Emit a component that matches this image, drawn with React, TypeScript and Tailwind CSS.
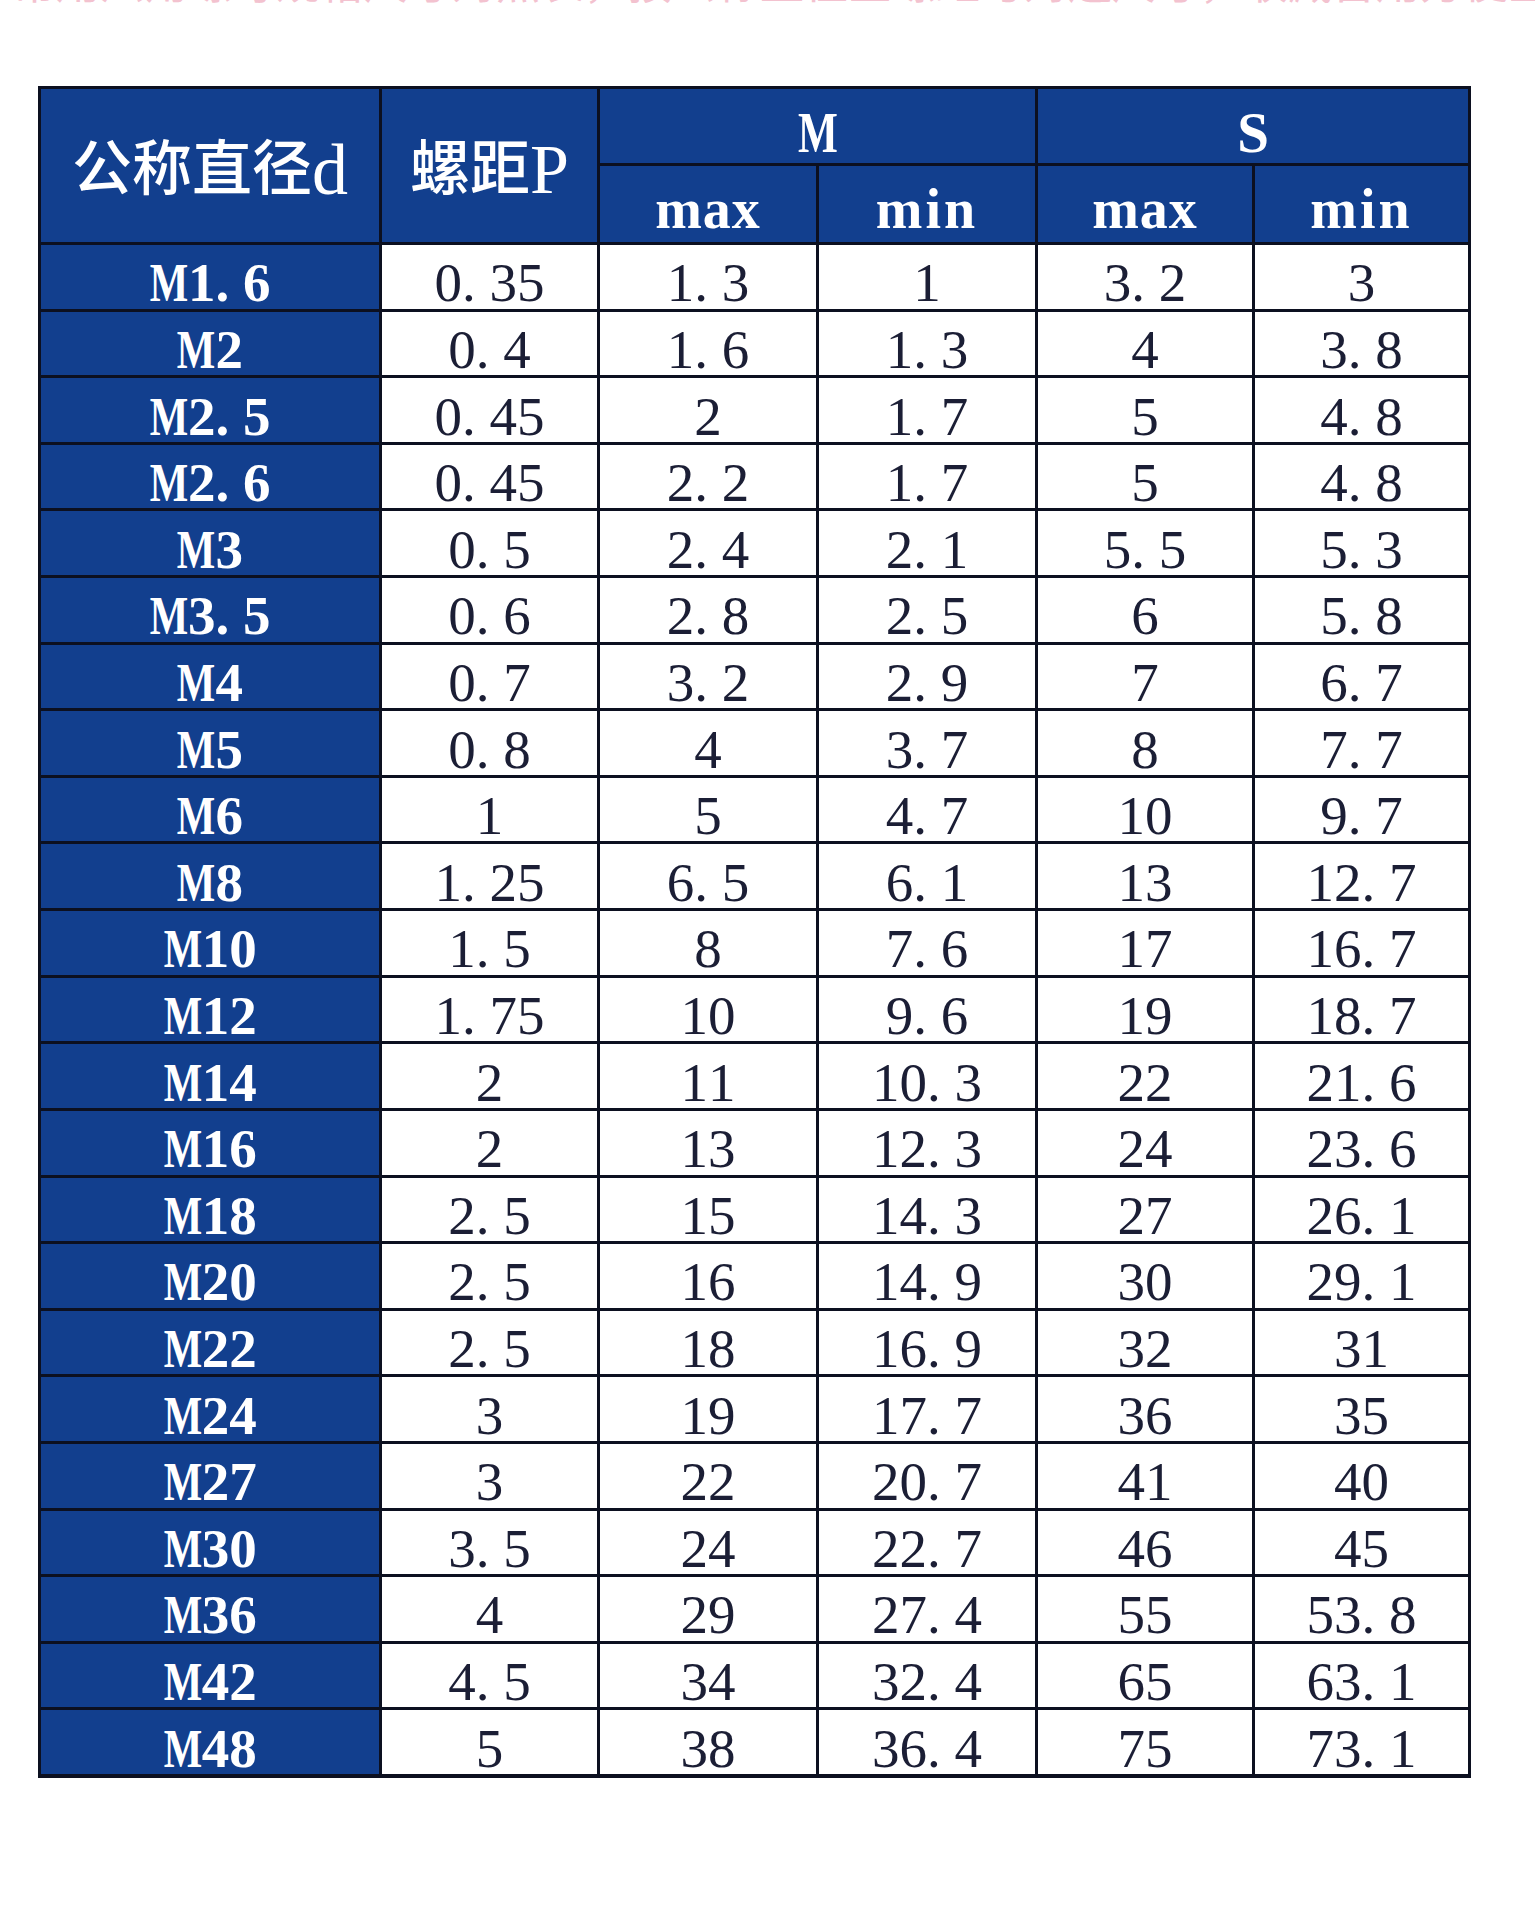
import React from "react"

const rows = [
  ["M1.6", "0.35", "1.3", "1", "3.2", "3"],
  ["M2", "0.4", "1.6", "1.3", "4", "3.8"],
  ["M2.5", "0.45", "2", "1.7", "5", "4.8"],
  ["M2.6", "0.45", "2.2", "1.7", "5", "4.8"],
  ["M3", "0.5", "2.4", "2.1", "5.5", "5.3"],
  ["M3.5", "0.6", "2.8", "2.5", "6", "5.8"],
  ["M4", "0.7", "3.2", "2.9", "7", "6.7"],
  ["M5", "0.8", "4", "3.7", "8", "7.7"],
  ["M6", "1", "5", "4.7", "10", "9.7"],
  ["M8", "1.25", "6.5", "6.1", "13", "12.7"],
  ["M10", "1.5", "8", "7.6", "17", "16.7"],
  ["M12", "1.75", "10", "9.6", "19", "18.7"],
  ["M14", "2", "11", "10.3", "22", "21.6"],
  ["M16", "2", "13", "12.3", "24", "23.6"],
  ["M18", "2.5", "15", "14.3", "27", "26.1"],
  ["M20", "2.5", "16", "14.9", "30", "29.1"],
  ["M22", "2.5", "18", "16.9", "32", "31"],
  ["M24", "3", "19", "17.7", "36", "35"],
  ["M27", "3", "22", "20.7", "41", "40"],
  ["M30", "3.5", "24", "22.7", "46", "45"],
  ["M36", "4", "29", "27.4", "55", "53.8"],
  ["M42", "4.5", "34", "32.4", "65", "63.1"],
  ["M48", "5", "38", "36.4", "75", "73.1"],
]

const font = "font-['Liberation_Serif','Noto_Sans_CJK_SC',serif]"

// the source font is fixed-width: the point takes a whole digit cell, M is narrow
function Value({ text }: { text: string }) {
  return (
    <>
      {text.split("").map((ch, i) => {
        if (ch === ".") return <span key={i} className="mr-[0.25em]">.</span>
        if (ch === "M")
          return (
            <span key={i} className="inline-block scale-x-[0.74] -mx-[0.12em]">
              M
            </span>
          )
        return <span key={i}>{ch}</span>
      })}
    </>
  )
}

export default function App() {
  const head = "bg-[#123f8e] text-white flex items-center justify-center leading-none"

  return (
    <div className={`w-[1535px] h-[1920px] bg-white overflow-hidden ${font}`}>
      {/* cut-off caption line from the photo above the table */}
      <div className="h-[4px] overflow-hidden flex flex-col justify-end">
        <div className="shrink-0 pl-[12px] text-[44px] leading-[48px] text-[#f3c2cf] whitespace-nowrap font-['Noto_Sans_CJK_SC',sans-serif]">
          常用六角螺母规格尺寸对照表，按公称直径查螺距与对边尺寸，收藏备用方便查询
        </div>
      </div>

      <div className="mt-[82px] ml-[38px] w-[1433px] h-[1692px] grid grid-cols-[338px_215px_216px_216px_214px_213px] grid-rows-[74px_76px_repeat(23,minmax(0,1fr))] gap-[3px] border-[3px] border-b-[4px] border-[#0c1020] bg-[#0c1020]">
        <div className={`${head} row-span-2 text-[60px] font-medium pt-[8px]`}>
          公称直径<span className="text-[72px] font-normal">d</span>
        </div>
        <div className={`${head} row-span-2 text-[60px] font-medium pt-[8px]`}>
          螺距<span className="text-[70px] font-normal">P</span>
        </div>
        <div className={`${head} col-span-2 text-[57px] font-bold pt-[12px]`}>
          <Value text="M" />
        </div>
        <div className={`${head} col-span-2 text-[57px] font-bold pt-[12px]`}>S</div>
        <div className={`${head} text-[56px] font-bold pt-[10px] tracking-[1px]`}>max</div>
        <div className={`${head} text-[56px] font-bold pt-[10px] tracking-[3px]`}>min</div>
        <div className={`${head} text-[56px] font-bold pt-[10px] tracking-[1px]`}>max</div>
        <div className={`${head} text-[56px] font-bold pt-[10px] tracking-[3px]`}>min</div>

        {rows.map((row) =>
          row.map((cell, c) =>
            c === 0 ? (
              <div
                key={row[0] + c}
                className="bg-[#123f8e] text-white font-bold text-[55px] leading-none flex items-center justify-center pt-[12px]"
              >
                <Value text={cell} />
              </div>
            ) : (
              <div
                key={row[0] + c}
                className="bg-white text-[#1b1e35] text-[55px] leading-none flex items-center justify-center pt-[12px]"
              >
                <Value text={cell} />
              </div>
            )
          )
        )}
      </div>
    </div>
  )
}
